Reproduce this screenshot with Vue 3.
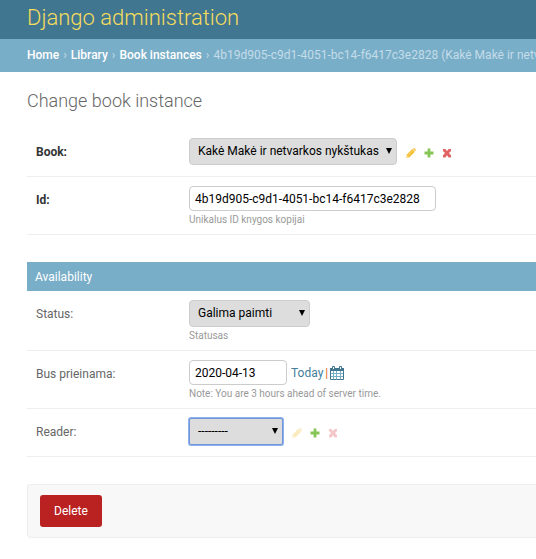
<script setup>
import { ref } from 'vue'

const book = ref('Kakė Makė ir netvarkos nykštukas')
const id = ref('4b19d905-c9d1-4051-bc14-f6417c3e2828')
const status = ref('Galima paimti')
const due = ref('2020-04-13')
const reader = ref('---------')
</script>

<template>
  <div class="page">
    <svg class="defs" width="0" height="0" aria-hidden="true">
      <symbol id="icon-change" viewBox="0 0 10 10">
        <path d="M0.3 9.7 L0.8 6.5 L6.2 1.1 L8.9 3.8 L3.5 9.2 Z" fill="#f3bf32" />
        <path d="M6.8 0.8 L7.4 0.3 Q8 -0.1 8.6 0.3 L9.7 1.4 Q10.100 2 9.700 2.600 L9.200 3.200 Z" fill="#f5c64c" />
        <path d="M2 7.400 L6.600 2.800" stroke="#fbe3a0" stroke-width="0.7" />
        <path d="M0.900 7.700 L2.300 9.100" stroke="#fff" stroke-width="0.6" />
      </symbol>
      <symbol id="icon-add" viewBox="0 0 10 10">
        <path d="M3.600 0.600 h2.800 v3 h3.100 v2.800 h-3.100 v3.100 h-2.800 v-3.100 h-3.100 v-2.800 h3.100 z" fill="#86c556" />
      </symbol>
      <symbol id="icon-delete" viewBox="0 0 10 10">
        <path d="M1 1 H3.400 L5 2.900 L6.600 1 H9 V3 L7 5 L9 7.200 V9.400 H6.600 L5 7.300 L3.400 9.400 H1 V7.200 L3 5 L1 3 Z" fill="#e26363" />
      </symbol>
    </svg>

    <header class="header"><h1>Django administration</h1></header>
    <nav class="breadcrumbs" aria-label="Breadcrumbs">
      <a href="#">Home</a><span>›</span>
      <a href="#">Library</a><span>›</span>
      <a href="#">Book instances</a><span>›</span>
      <span>4b19d905-c9d1-4051-bc14-f6417c3e2828 (Kakė Makė ir netvarkos nykštukas)</span>
    </nav>

    <main class="content">
      <h2 class="title">Change book instance</h2>
      <form @submit.prevent>
        <div class="row">
          <label class="label required" for="book">Book:</label>
          <div class="field">
            <div class="controls">
              <span class="select book">
                <select id="book" v-model="book"><option>Kakė Makė ir netvarkos nykštukas</option></select>
              </span>
              <span class="related">
                <a href="#" aria-label="Change book"><svg><use href="#icon-change" /></svg></a>
                <a href="#" aria-label="Add book"><svg><use href="#icon-add" /></svg></a>
                <a href="#" aria-label="Delete book"><svg><use href="#icon-delete" /></svg></a>
              </span>
            </div>
          </div>
        </div>
        <div class="row">
          <label class="label required" for="id">Id:</label>
          <div class="field">
            <input id="id" v-model="id" class="text id" type="text" />
            <p class="help">Unikalus ID knygos kopijai</p>
          </div>
        </div>

        <section class="module">
          <h3>Availability</h3>
          <div class="row">
            <label class="label" for="status">Status:</label>
            <div class="field">
              <span class="select status">
                <select id="status" v-model="status"><option>Galima paimti</option></select>
              </span>
              <p class="help">Statusas</p>
            </div>
          </div>
          <div class="row">
            <label class="label" for="due">Bus prieinama:</label>
            <div class="field">
              <div class="controls">
                <input id="due" v-model="due" class="text date" type="text" />
                <span class="shortcuts">
                  <a href="#">Today</a><span class="bar">|</span>
                  <a href="#" class="calendar" aria-label="Choose date">
                    <svg viewBox="0 0 14 14">
                      <path d="M0.5 3 v10.5 h13 v-10.5" fill="#fff" stroke="#417690" />
                      <path d="M0 2 h14 v3 h-14 z" fill="#417690" />
                      <path d="M3.5 5 v8.500 M6.500 5 v8.500 M10.500 5 v8.500 M1 7.500 h12 M1 10.500 h12" stroke="#79aec8" fill="none" />
                      <path d="M2.500 0.500 h2 v3 h-2 z M9.500 0.500 h2 v3 h-2 z" fill="#fff" stroke="#417690" />
                    </svg>
                  </a>
                </span>
              </div>
              <p class="help">Note: You are 3 hours ahead of server time.</p>
            </div>
          </div>
          <div class="row">
            <label class="label" for="reader">Reader:</label>
            <div class="field">
              <div class="controls">
                <span class="select reader">
                  <select id="reader" v-model="reader"><option>---------</option></select>
                </span>
                <span class="related">
                  <a class="off" href="#" aria-label="Change reader"><svg><use href="#icon-change" /></svg></a>
                  <a href="#" aria-label="Add reader"><svg><use href="#icon-add" /></svg></a>
                  <a class="off" href="#" aria-label="Delete reader"><svg><use href="#icon-delete" /></svg></a>
                </span>
              </div>
            </div>
          </div>
        </section>

        <div class="submit-row"><button class="delete" type="button">Delete</button></div>
      </form>
    </main>
  </div>
</template>

<style>
body { margin: 0; background: #fff; }
</style>

<style scoped>
.page {
  font-family: Roboto, "Liberation Sans", sans-serif;
  font-size: 12px;
  color: #333;
  overflow: hidden;
}
.page * { box-sizing: border-box; }
.defs { position: absolute; }
a { text-decoration: none; color: #447e9b; }
h1, h2, h3, p { margin: 0; }
.header { background: #417690; padding: 4px 27px 7px; }
.header h1 { font-size: 22px; line-height: 28px; font-weight: 300; color: #f5dd5d; }
.breadcrumbs {
  display: flex;
  gap: 4px;
  background: #79aec8;
  color: #c4dce8;
  padding: 8px 0 9px 27px;
  line-height: 16px;
  white-space: nowrap;
}
.breadcrumbs a { color: #fff; font-weight: 500; }
.content { padding: 18px 0 20px 27px; }
.title { font-size: 18px; line-height: 22px; font-weight: 300; color: #666; margin-bottom: 16px; }
.row { display: flex; padding: 9px 9px 7px; border-bottom: 1px solid #eee; }
.row:first-child { padding-top: 10px; padding-bottom: 11px; }
.row:last-child { padding-bottom: 11px; }
.label { flex: 0 0 153px; padding-top: 7px; line-height: 14px; color: #666; }
.required { font-weight: 700; color: #333; }
.field { flex: 1; min-width: 0; }
.controls { display: flex; align-items: center; }
.select { position: relative; display: block; }
.select::after {
  content: "";
  position: absolute;
  right: 5px;
  top: 10px;
  border: 3px solid transparent;
  border-top: 6px solid #000;
  border-bottom: 0;
  pointer-events: none;
}
select, .text {
  display: block;
  margin: 0;
  border: 1px solid #ccc;
  border-radius: 4px;
  font: 12px/15px Roboto, "Liberation Sans", sans-serif;
  color: #000;
  outline: none;
}
select { appearance: none; width: 100%; height: 27px; padding: 0 8px; background: #ddd; }
.text { height: 25px; padding: 0 5px; background: #fff; }
.book { width: 208px; }
.status { width: 121px; }
.reader { width: 94px; }
.reader select { border-color: #6e96d8; box-shadow: 0 0 0 1px #8fb2ee; border-radius: 2px; }
.id { width: 247px; }
.date { width: 98px; }
.help { font-size: 10px; line-height: 14px; color: #999; padding-top: 2px; }
.related { display: flex; gap: 8px; margin-left: 9px; padding-top: 2px; }
.related a { display: block; height: 10px; }
.related svg { display: block; width: 10px; height: 10px; }
.off { opacity: 0.35; }
.shortcuts { display: flex; align-items: center; margin-left: 4px; line-height: 14px; }
.bar { margin: 0 2px; color: #e0641a; }
.calendar svg { display: block; width: 14px; height: 14px; }
.module { margin-top: 27px; }
.module h3 {
  background: #79aec8;
  color: #fff;
  padding: 8px 8px 7px;
  font-size: 12px;
  line-height: 14px;
  font-weight: 400;
}
.submit-row {
  margin-top: 27px;
  padding: 10px 12px;
  background: #f8f8f8;
  border: 1px solid #eee;
  border-right: 0;
  border-radius: 4px 0 0 4px;
}
.delete {
  display: block;
  border: 0;
  border-radius: 3px;
  background: #ba2121;
  color: #fff;
  font: 12px/16px Roboto, "Liberation Sans", sans-serif;
  padding: 8px 14px;
}
</style>
